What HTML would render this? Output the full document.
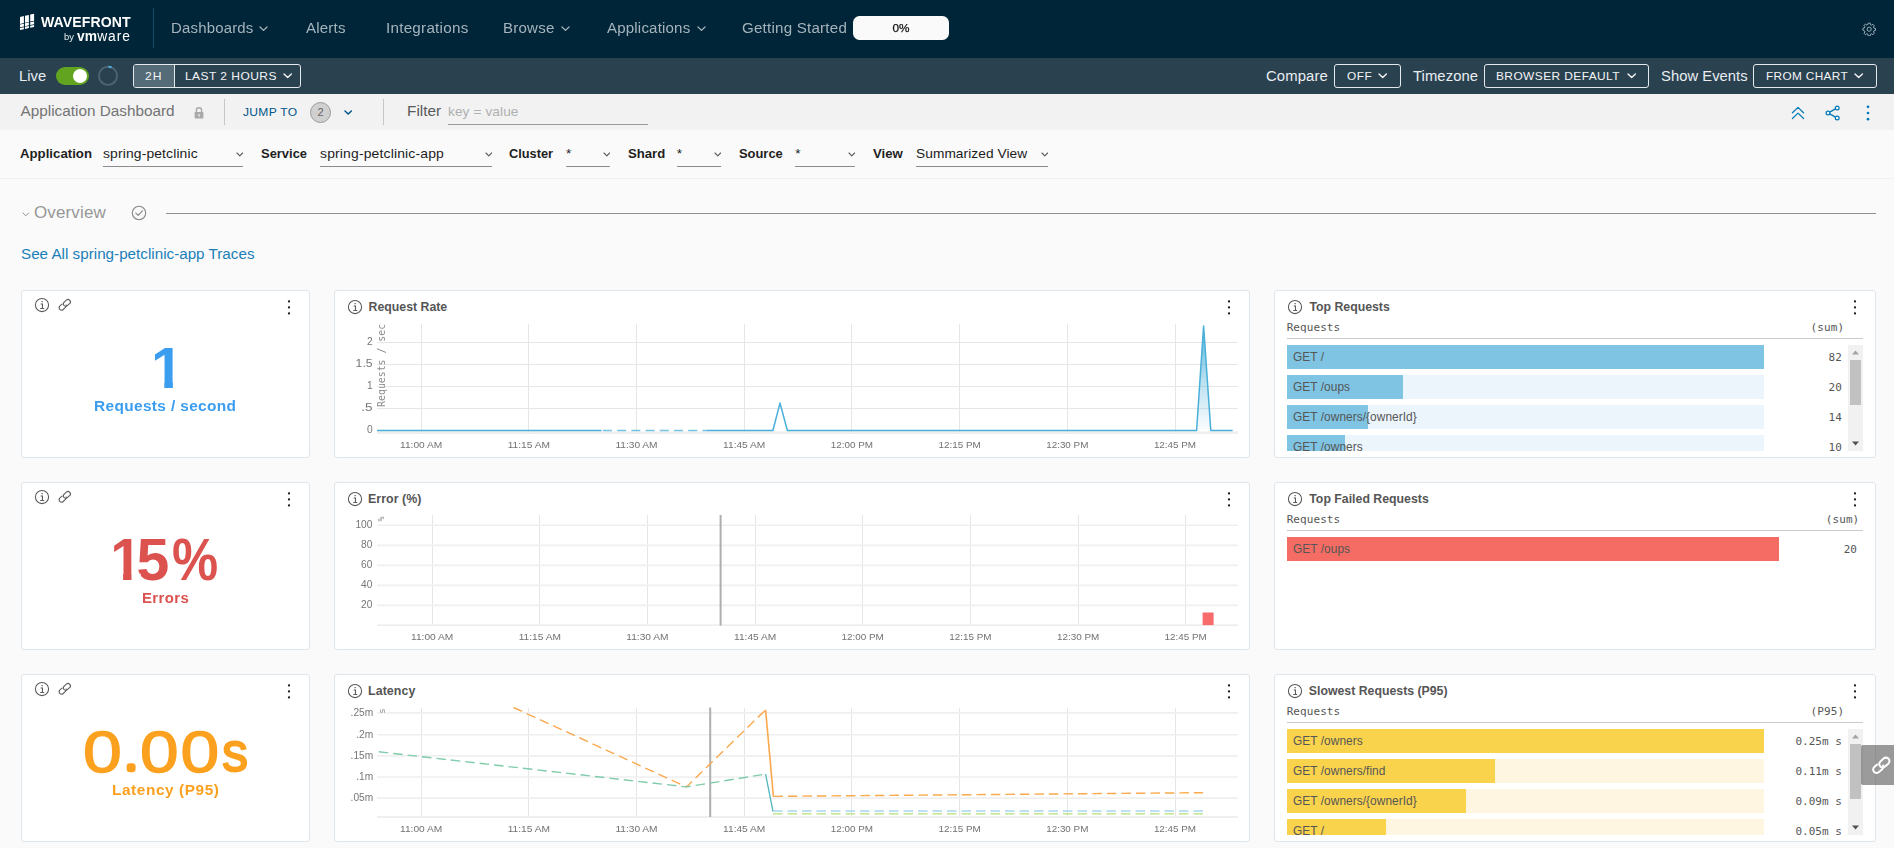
<!DOCTYPE html>
<html lang="en"><head><meta charset="utf-8"><title>Application Dashboard | Wavefront</title>
<style>
html,body{margin:0;padding:0;background:#fafafa;}
body{width:1894px;height:848px;position:relative;overflow:hidden;font-family:"Liberation Sans",Arial,sans-serif;-webkit-font-smoothing:antialiased;}
.r{position:absolute;display:block;margin:0;padding:0;}
.gs{will-change:transform;}
.t{position:absolute;display:block;white-space:nowrap;margin:0;padding:0;}
svg text{white-space:pre;}
</style></head><body>
<div class="r gs" style="left:0;top:0;width:1894px;height:58px">
<div class="r" style="left:0px;top:0px;width:1894px;height:58px;background:#002538;"></div>
<svg class="r" style="left:20px;top:13.2px;" width="15" height="18" viewBox="0 0 15 18"><path d="M0.00 3.90 L3.90 3.10 L3.90 10.10 L0.00 10.90 Z" fill="#fff"/><path d="M0.00 11.55 L3.90 10.75 L3.90 13.55 L0.00 14.35 Z" fill="#fff"/><path d="M0.00 15.00 L3.90 14.20 L3.90 16.30 L0.00 17.10 Z" fill="#fff"/><path d="M5.00 2.70 L8.90 1.90 L8.90 8.90 L5.00 9.70 Z" fill="#fff"/><path d="M5.00 10.35 L8.90 9.55 L8.90 12.35 L5.00 13.15 Z" fill="#fff"/><path d="M5.00 13.80 L8.90 13.00 L8.90 15.10 L5.00 15.90 Z" fill="#fff"/><path d="M10.20 1.60 L14.10 0.80 L14.10 7.80 L10.20 8.60 Z" fill="#fff"/><path d="M10.20 9.25 L14.10 8.45 L14.10 11.25 L10.20 12.05 Z" fill="#fff"/><path d="M10.20 12.70 L14.10 11.90 L14.10 14.00 L10.20 14.80 Z" fill="#fff"/></svg>
<span class="t" style="left:40.50px;top:12.84px;font:700 14px/18px 'Liberation Sans', Arial, sans-serif;color:#ffffff;letter-spacing:0.076px;transform:scaleX(1.0070);transform-origin:0 0;">WAVEFRONT</span>
<span class="t" style="left:64.29px;top:31.17px;font:400 9.6px/12px 'Liberation Sans', Arial, sans-serif;color:#e8edf0;letter-spacing:0.000px;transform:scaleX(0.9785);transform-origin:0 0;">by</span>
<span class="t" style="left:77.1px;top:27.9px;font:400 13.8px/18px 'Liberation Sans', Arial, sans-serif;color:#fff;letter-spacing:0.9px"><b style="letter-spacing:0.1px">vm</b>ware</span>
<div class="r" style="left:153px;top:8px;width:1px;height:40px;background:#0f4a6c;"></div>
<span class="t" style="left:170.80px;top:18.80px;font:400 14.7px/19px 'Liberation Sans', Arial, sans-serif;color:#a5b4bc;letter-spacing:0.167px;transform:scaleX(1.0197);transform-origin:0 0;">Dashboards</span>
<svg class="r" style="left:257.7px;top:24.9px;" width="11" height="7.4" viewBox="0 0 11 7.4"><path d="M2 2 L5.5 5.4 L9 2" fill="none" stroke="#a5b4bc" stroke-width="1.3" stroke-linecap="round" stroke-linejoin="round"/></svg>
<span class="t" style="left:305.80px;top:18.80px;font:400 14.7px/19px 'Liberation Sans', Arial, sans-serif;color:#a5b4bc;letter-spacing:0.181px;transform:scaleX(1.0251);transform-origin:0 0;">Alerts</span>
<span class="t" style="left:386.23px;top:18.80px;font:400 14.7px/19px 'Liberation Sans', Arial, sans-serif;color:#a5b4bc;letter-spacing:0.238px;transform:scaleX(1.0362);transform-origin:0 0;">Integrations</span>
<span class="t" style="left:503.39px;top:18.80px;font:400 14.7px/19px 'Liberation Sans', Arial, sans-serif;color:#a5b4bc;letter-spacing:0.228px;transform:scaleX(1.0248);transform-origin:0 0;">Browse</span>
<svg class="r" style="left:559.5px;top:24.9px;" width="11" height="7.4" viewBox="0 0 11 7.4"><path d="M2 2 L5.5 5.4 L9 2" fill="none" stroke="#a5b4bc" stroke-width="1.3" stroke-linecap="round" stroke-linejoin="round"/></svg>
<span class="t" style="left:607.30px;top:18.80px;font:400 14.7px/19px 'Liberation Sans', Arial, sans-serif;color:#a5b4bc;letter-spacing:0.177px;transform:scaleX(1.0253);transform-origin:0 0;">Applications</span>
<svg class="r" style="left:695.5px;top:24.9px;" width="11" height="7.4" viewBox="0 0 11 7.4"><path d="M2 2 L5.5 5.4 L9 2" fill="none" stroke="#a5b4bc" stroke-width="1.3" stroke-linecap="round" stroke-linejoin="round"/></svg>
<span class="t" style="left:742.24px;top:18.80px;font:400 14.7px/19px 'Liberation Sans', Arial, sans-serif;color:#a5b4bc;letter-spacing:0.207px;transform:scaleX(1.0306);transform-origin:0 0;">Getting Started</span>
<div class="r" style="left:853px;top:16px;width:96px;height:24px;background:#fafafa;border-radius:6.5px"></div>
<span class="t" style="left:892.45px;top:20.61px;font:400 11.8px/15px 'Liberation Sans', Arial, sans-serif;color:#111;letter-spacing:0.000px;-webkit-text-stroke:0.25px #111;">0%</span>
<svg class="r" style="left:1862px;top:22px;" width="14.4" height="14.4" viewBox="0 0 16 16"><g fill="none" stroke="#9fb0ba" stroke-width="1.1"><circle cx="8" cy="8" r="2.3"/><path d="M6.9 1.3h2.2l.35 1.75 1.25.52 1.5-1 1.55 1.55-1 1.5.52 1.25 1.75.35v2.2l-1.75.35-.52 1.25 1 1.5-1.55 1.55-1.5-1-1.25.52-.35 1.75H6.9l-.35-1.75-1.25-.52-1.5 1-1.55-1.55 1-1.5-.52-1.25L1 9.1V6.9l1.73-.35.52-1.25-1-1.5L3.8 2.25l1.5 1 1.25-.52z" stroke-linejoin="round"/></g></svg>
</div>
<div class="r" style="left:0px;top:58px;width:1894px;height:36px;background:#2a4150;"></div>
<span class="t" style="left:19.42px;top:66.50px;font:400 14.7px/19px 'Liberation Sans', Arial, sans-serif;color:#e9edf0;letter-spacing:0.031px;transform:scaleX(1.0038);transform-origin:0 0;">Live</span>
<div class="r" style="left:56px;top:67px;width:33px;height:18px;background:#62a420;border-radius:9px"></div>
<div class="r" style="left:72.8px;top:68.8px;width:14.4px;height:14.4px;background:#ffffff;border-radius:7.2px"></div>
<svg class="r" style="left:97px;top:65px;" width="22" height="22" viewBox="0 0 22 22"><circle cx="11" cy="10.8" r="9.1" fill="none" stroke="#4d6473" stroke-width="1.9"/><path d="M11.4 1.7 A9.1 9.1 0 0 1 14.6 2.45" fill="none" stroke="#49afd9" stroke-width="1.9"/></svg>
<div class="r" style="left:133px;top:64px;width:168px;height:24px;background:transparent;border:1px solid #e6eaec;border-radius:3px;box-sizing:border-box"></div>
<div class="r" style="left:134px;top:65px;width:40px;height:22px;background:#566b78;border-radius:2px 0 0 2px;border-right:1px solid #e6eaec"></div>
<span class="t" style="left:145.39px;top:69.18px;font:400 11.3px/15px 'Liberation Sans', Arial, sans-serif;color:#f2f4f5;letter-spacing:0.912px;transform:scaleX(1.0758);transform-origin:0 0;">2H</span>
<span class="t" style="left:184.54px;top:69.18px;font:400 11.3px/15px 'Liberation Sans', Arial, sans-serif;color:#f2f4f5;letter-spacing:0.424px;transform:scaleX(1.0618);transform-origin:0 0;">LAST 2 HOURS</span>
<svg class="r" style="left:282.3px;top:72.2px;" width="11.4" height="7.6" viewBox="0 0 11.4 7.6"><path d="M2 2 L5.7 5.6 L9.4 2" fill="none" stroke="#f2f4f5" stroke-width="1.4" stroke-linecap="round" stroke-linejoin="round"/></svg>
<span class="t" style="left:1266.06px;top:66.50px;font:400 14.7px/19px 'Liberation Sans', Arial, sans-serif;color:#e9edf0;letter-spacing:0.116px;transform:scaleX(1.0119);transform-origin:0 0;">Compare</span>
<div class="r" style="left:1334px;top:64px;width:67px;height:24px;background:transparent;border:1px solid #e6eaec;border-radius:3px;box-sizing:border-box"></div>
<span class="t" style="left:1347.07px;top:69.18px;font:400 11.3px/15px 'Liberation Sans', Arial, sans-serif;color:#f2f4f5;letter-spacing:0.492px;transform:scaleX(1.0476);transform-origin:0 0;">OFF</span>
<svg class="r" style="left:1377.3px;top:72.2px;" width="11.4" height="7.6" viewBox="0 0 11.4 7.6"><path d="M2 2 L5.7 5.6 L9.4 2" fill="none" stroke="#f2f4f5" stroke-width="1.4" stroke-linecap="round" stroke-linejoin="round"/></svg>
<span class="t" style="left:1413.20px;top:66.50px;font:400 14.7px/19px 'Liberation Sans', Arial, sans-serif;color:#e9edf0;letter-spacing:0.075px;transform:scaleX(1.0084);transform-origin:0 0;">Timezone</span>
<div class="r" style="left:1484px;top:64px;width:165px;height:24px;background:transparent;border:1px solid #e6eaec;border-radius:3px;box-sizing:border-box"></div>
<span class="t" style="left:1496.35px;top:69.18px;font:400 11.3px/15px 'Liberation Sans', Arial, sans-serif;color:#f2f4f5;letter-spacing:0.406px;transform:scaleX(1.0543);transform-origin:0 0;">BROWSER DEFAULT</span>
<svg class="r" style="left:1625.6px;top:72.2px;" width="11.4" height="7.6" viewBox="0 0 11.4 7.6"><path d="M2 2 L5.7 5.6 L9.4 2" fill="none" stroke="#f2f4f5" stroke-width="1.4" stroke-linecap="round" stroke-linejoin="round"/></svg>
<span class="t" style="left:1661.23px;top:66.50px;font:400 14.7px/19px 'Liberation Sans', Arial, sans-serif;color:#e9edf0;letter-spacing:0.045px;transform:scaleX(1.0053);transform-origin:0 0;">Show Events</span>
<div class="r" style="left:1753px;top:64px;width:124px;height:24px;background:transparent;border:1px solid #e6eaec;border-radius:3px;box-sizing:border-box"></div>
<span class="t" style="left:1765.76px;top:69.18px;font:400 11.3px/15px 'Liberation Sans', Arial, sans-serif;color:#f2f4f5;letter-spacing:0.343px;transform:scaleX(1.0435);transform-origin:0 0;">FROM CHART</span>
<svg class="r" style="left:1853.3px;top:72.2px;" width="11.4" height="7.6" viewBox="0 0 11.4 7.6"><path d="M2 2 L5.7 5.6 L9.4 2" fill="none" stroke="#f2f4f5" stroke-width="1.4" stroke-linecap="round" stroke-linejoin="round"/></svg>
<div class="r" style="left:0px;top:94px;width:1894px;height:36px;background:#f2f2f2;"></div>
<span class="t" style="left:20.60px;top:100.89px;font:400 15.3px/20px 'Liberation Sans', Arial, sans-serif;color:#747474;letter-spacing:0.000px;">Application Dashboard</span>
<svg class="r" style="left:193px;top:106px;" width="12" height="14" viewBox="0 0 12 14"><path d="M3.4 6.2V4.3a2.6 2.6 0 0 1 5.2 0v1.9" fill="none" stroke="#a9a9a9" stroke-width="1.4"/><rect x="1.6" y="6" width="8.8" height="6.6" rx="0.8" fill="#a9a9a9"/><rect x="5.4" y="8" width="1.2" height="2.6" fill="#f2f2f2"/></svg>
<div class="r" style="left:224px;top:99px;width:1px;height:26px;background:#c6c6c6;"></div>
<span class="t" style="left:243.12px;top:104.47px;font:400 11.6px/15px 'Liberation Sans', Arial, sans-serif;color:#00568a;letter-spacing:0.310px;transform:scaleX(1.0390);transform-origin:0 0;">JUMP TO</span>
<div class="r" style="left:310px;top:102px;width:21px;height:21px;background:#d0d0d0;border-radius:11px;border:1px solid #9a9a9a;box-sizing:border-box"></div>
<span class="t" style="left:317.45px;top:105.18px;font:400 11px/14px 'Liberation Sans', Arial, sans-serif;color:#666;letter-spacing:0.000px;">2</span>
<svg class="r" style="left:342.7px;top:108.8px;" width="10.4" height="7.0" viewBox="0 0 10.4 7.0"><path d="M2 2 L5.2 5.0 L8.4 2" fill="none" stroke="#00568a" stroke-width="1.5" stroke-linecap="round" stroke-linejoin="round"/></svg>
<div class="r" style="left:383px;top:99px;width:1px;height:26px;background:#c6c6c6;"></div>
<span class="t" style="left:407.37px;top:100.89px;font:400 15.3px/20px 'Liberation Sans', Arial, sans-serif;color:#5a5a5a;letter-spacing:0.021px;transform:scaleX(1.0032);transform-origin:0 0;">Filter</span>
<span class="t" style="left:447.91px;top:102.85px;font:400 13.4px/17px 'Liberation Sans', Arial, sans-serif;color:#b0b0b0;letter-spacing:0.112px;transform:scaleX(1.0170);transform-origin:0 0;">key = value</span>
<div class="r" style="left:448px;top:124px;width:200px;height:1px;background:#9a9a9a;"></div>
<svg class="r" style="left:1790px;top:105px;" width="16" height="16" viewBox="0 0 16 16"><path d="M2.4 7.8 L8 2.4 L13.6 7.8 M2.4 13.5 L8 8.1 L13.6 13.5" fill="none" stroke="#0079b8" stroke-width="1.2" stroke-linejoin="round" stroke-linecap="round"/></svg>
<svg class="r" style="left:1825px;top:105px;" width="16" height="16" viewBox="0 0 16 16"><g fill="none" stroke="#0079b8" stroke-width="1.2"><circle cx="12.2" cy="3" r="1.9"/><circle cx="12.2" cy="13" r="1.9"/><circle cx="3" cy="8" r="1.9"/><path d="M4.7 7.1 L10.5 3.9 M4.7 8.9 L10.5 12.1"/></g></svg>
<svg class="r" style="left:1865px;top:104px;" width="6" height="18" viewBox="0 0 6 18"><g fill="#0079b8"><circle cx="3" cy="2.8" r="1.35"/><circle cx="3" cy="9" r="1.35"/><circle cx="3" cy="15.2" r="1.35"/></g></svg>
<div class="r" style="left:0px;top:130px;width:1894px;height:718px;background:#fafafa;"></div>
<div class="r" style="left:0px;top:178px;width:1894px;height:1px;background:#f0f0f0;"></div>
<span class="t" style="left:19.97px;top:144.85px;font:700 13.4px/17px 'Liberation Sans', Arial, sans-serif;color:#1f1f1f;letter-spacing:0.000px;transform:scaleX(0.9871);transform-origin:0 0;">Application</span>
<span class="t" style="left:103.35px;top:144.88px;font:400 13.6px/18px 'Liberation Sans', Arial, sans-serif;color:#1c1c1c;letter-spacing:0.129px;transform:scaleX(1.0220);transform-origin:0 0;">spring-petclinic</span>
<div class="r" style="left:103px;top:166px;width:140px;height:1px;background:#8c8c8c;"></div>
<svg class="r" style="left:235.0px;top:151.45px;" width="9.6" height="6.9" viewBox="0 0 9.6 6.9"><path d="M2 2 L4.8 4.9 L7.6 2" fill="none" stroke="#5c5c5c" stroke-width="1.1" stroke-linecap="round" stroke-linejoin="round"/></svg>
<span class="t" style="left:261.41px;top:144.85px;font:700 13.4px/17px 'Liberation Sans', Arial, sans-serif;color:#1f1f1f;letter-spacing:0.000px;transform:scaleX(0.9659);transform-origin:0 0;">Service</span>
<span class="t" style="left:319.65px;top:144.88px;font:400 13.6px/18px 'Liberation Sans', Arial, sans-serif;color:#1c1c1c;letter-spacing:0.153px;transform:scaleX(1.0255);transform-origin:0 0;">spring-petclinic-app</span>
<div class="r" style="left:320px;top:166px;width:172px;height:1px;background:#8c8c8c;"></div>
<svg class="r" style="left:484.1px;top:151.45px;" width="9.6" height="6.9" viewBox="0 0 9.6 6.9"><path d="M2 2 L4.8 4.9 L7.6 2" fill="none" stroke="#5c5c5c" stroke-width="1.1" stroke-linecap="round" stroke-linejoin="round"/></svg>
<span class="t" style="left:509.49px;top:144.85px;font:700 13.4px/17px 'Liberation Sans', Arial, sans-serif;color:#1f1f1f;letter-spacing:0.000px;transform:scaleX(0.9554);transform-origin:0 0;">Cluster</span>
<span class="t" style="left:566.00px;top:144.88px;font:400 13.6px/18px 'Liberation Sans', Arial, sans-serif;color:#1c1c1c;letter-spacing:0.000px;">*</span>
<div class="r" style="left:566px;top:166px;width:44px;height:1px;background:#8c8c8c;"></div>
<svg class="r" style="left:601.6px;top:151.45px;" width="9.6" height="6.9" viewBox="0 0 9.6 6.9"><path d="M2 2 L4.8 4.9 L7.6 2" fill="none" stroke="#5c5c5c" stroke-width="1.1" stroke-linecap="round" stroke-linejoin="round"/></svg>
<span class="t" style="left:627.91px;top:144.85px;font:700 13.4px/17px 'Liberation Sans', Arial, sans-serif;color:#1f1f1f;letter-spacing:0.000px;transform:scaleX(0.9805);transform-origin:0 0;">Shard</span>
<span class="t" style="left:676.80px;top:144.88px;font:400 13.6px/18px 'Liberation Sans', Arial, sans-serif;color:#1c1c1c;letter-spacing:0.000px;">*</span>
<div class="r" style="left:677px;top:166px;width:44px;height:1px;background:#8c8c8c;"></div>
<svg class="r" style="left:712.8px;top:151.45px;" width="9.6" height="6.9" viewBox="0 0 9.6 6.9"><path d="M2 2 L4.8 4.9 L7.6 2" fill="none" stroke="#5c5c5c" stroke-width="1.1" stroke-linecap="round" stroke-linejoin="round"/></svg>
<span class="t" style="left:738.61px;top:144.85px;font:700 13.4px/17px 'Liberation Sans', Arial, sans-serif;color:#1f1f1f;letter-spacing:0.000px;transform:scaleX(0.9637);transform-origin:0 0;">Source</span>
<span class="t" style="left:795.30px;top:144.88px;font:400 13.6px/18px 'Liberation Sans', Arial, sans-serif;color:#1c1c1c;letter-spacing:0.000px;">*</span>
<div class="r" style="left:795px;top:166px;width:60px;height:1px;background:#8c8c8c;"></div>
<svg class="r" style="left:846.9px;top:151.45px;" width="9.6" height="6.9" viewBox="0 0 9.6 6.9"><path d="M2 2 L4.8 4.9 L7.6 2" fill="none" stroke="#5c5c5c" stroke-width="1.1" stroke-linecap="round" stroke-linejoin="round"/></svg>
<span class="t" style="left:873.13px;top:144.85px;font:700 13.4px/17px 'Liberation Sans', Arial, sans-serif;color:#1f1f1f;letter-spacing:0.000px;transform:scaleX(0.9840);transform-origin:0 0;">View</span>
<span class="t" style="left:915.78px;top:144.88px;font:400 13.6px/18px 'Liberation Sans', Arial, sans-serif;color:#1c1c1c;letter-spacing:0.064px;transform:scaleX(1.0083);transform-origin:0 0;">Summarized View</span>
<div class="r" style="left:916px;top:166px;width:132px;height:1px;background:#8c8c8c;"></div>
<svg class="r" style="left:1039.9px;top:151.45px;" width="9.6" height="6.9" viewBox="0 0 9.6 6.9"><path d="M2 2 L4.8 4.9 L7.6 2" fill="none" stroke="#5c5c5c" stroke-width="1.1" stroke-linecap="round" stroke-linejoin="round"/></svg>
<svg class="r" style="left:20.9px;top:210.5px;" width="9.6" height="6.8" viewBox="0 0 9.6 6.8"><path d="M2 2 L4.8 4.8 L7.6 2" fill="none" stroke="#8c8c8c" stroke-width="0.95" stroke-linecap="round" stroke-linejoin="round"/></svg>
<span class="t" style="left:34.13px;top:202.47px;font:400 16.8px/22px 'Liberation Sans', Arial, sans-serif;color:#979797;letter-spacing:0.127px;transform:scaleX(1.0130);transform-origin:0 0;">Overview</span>
<svg class="r" style="left:131px;top:204.6px;" width="16" height="16" viewBox="0 0 16 16"><circle cx="8" cy="8" r="6.7" fill="none" stroke="#8a8a8a" stroke-width="1.1"/><path d="M4.8 8.1 L7.2 10.4 L11.4 5.8" fill="none" stroke="#8a8a8a" stroke-width="1.2" stroke-linecap="round" stroke-linejoin="round"/></svg>
<div class="r" style="left:166px;top:212.6px;width:1710px;height:1.2px;background:#8f8f8f;"></div>
<span class="t" style="left:20.51px;top:244.39px;font:400 15.3px/20px 'Liberation Sans', Arial, sans-serif;color:#1a7fb9;letter-spacing:0.000px;transform:scaleX(0.9950);transform-origin:0 0;">See All spring-petclinic-app Traces</span>
<div class="r" style="left:21px;top:290px;width:289px;height:168px;background:#ffffff;border:1px solid #dfe6ec;border-radius:3px;box-sizing:border-box"></div>
<svg class="r" style="left:34px;top:296.9px;" width="16" height="16" viewBox="0 0 16 16"><circle cx="8" cy="8" r="6.6" fill="none" stroke="#585858" stroke-width="1.05"/><rect x="7.4" y="4.2" width="1.5" height="1.0" fill="#585858"/><path d="M6.7 7.0 H8.45 V11.4 M6.3 11.45 H10.2" fill="none" stroke="#585858" stroke-width="1.05"/></svg>
<svg class="r" style="left:56.5px;top:297.1px;" width="16" height="16" viewBox="0 0 16 16"><g fill="none" stroke="#5a5a5a" stroke-width="1.05"><rect x="-3.9" y="-2.4" width="7.8" height="4.8" rx="2.4" transform="translate(9.9 5.9) rotate(-42)"/><path d="M1.6 -2.4 H-1.5 a2.4 2.4 0 0 0 0 4.8 H1.5 a2.4 2.4 0 0 0 2.35 -1.9 M3.2 -1.75 a2.4 2.4 0 0 0 -0.6 -0.45" transform="translate(5.7 9.7) rotate(-42)"/></g></svg>
<svg class="r" style="left:286.1px;top:298.9px;" width="6" height="17" viewBox="0 0 6 17"><g fill="#1a1a1a"><circle cx="3" cy="2.4" r="1.15"/><circle cx="3" cy="8.4" r="1.15"/><circle cx="3" cy="14.4" r="1.15"/></g></svg>
<div class="r" style="left:334px;top:290px;width:916px;height:168px;background:#ffffff;border:1px solid #dfe6ec;border-radius:3px;box-sizing:border-box"></div>
<svg class="r" style="left:347px;top:299.1px;" width="16" height="16" viewBox="0 0 16 16"><circle cx="8" cy="8" r="6.6" fill="none" stroke="#585858" stroke-width="1.05"/><rect x="7.4" y="4.2" width="1.5" height="1.0" fill="#585858"/><path d="M6.7 7.0 H8.45 V11.4 M6.3 11.45 H10.2" fill="none" stroke="#585858" stroke-width="1.05"/></svg>
<svg class="r" style="left:1226px;top:299.1px;" width="6" height="17" viewBox="0 0 6 17"><g fill="#1a1a1a"><circle cx="3" cy="2.4" r="1.15"/><circle cx="3" cy="8.4" r="1.15"/><circle cx="3" cy="14.4" r="1.15"/></g></svg>
<div class="r" style="left:1274px;top:290px;width:602px;height:168px;background:#ffffff;border:1px solid #dfe6ec;border-radius:3px;box-sizing:border-box"></div>
<svg class="r" style="left:1287px;top:298.8px;" width="16" height="16" viewBox="0 0 16 16"><circle cx="8" cy="8" r="6.6" fill="none" stroke="#585858" stroke-width="1.05"/><rect x="7.4" y="4.2" width="1.5" height="1.0" fill="#585858"/><path d="M6.7 7.0 H8.45 V11.4 M6.3 11.45 H10.2" fill="none" stroke="#585858" stroke-width="1.05"/></svg>
<svg class="r" style="left:1851.8px;top:298.9px;" width="6" height="17" viewBox="0 0 6 17"><g fill="#1a1a1a"><circle cx="3" cy="2.4" r="1.15"/><circle cx="3" cy="8.4" r="1.15"/><circle cx="3" cy="14.4" r="1.15"/></g></svg>
<div class="r" style="left:21px;top:482px;width:289px;height:168px;background:#ffffff;border:1px solid #dfe6ec;border-radius:3px;box-sizing:border-box"></div>
<svg class="r" style="left:34px;top:488.9px;" width="16" height="16" viewBox="0 0 16 16"><circle cx="8" cy="8" r="6.6" fill="none" stroke="#585858" stroke-width="1.05"/><rect x="7.4" y="4.2" width="1.5" height="1.0" fill="#585858"/><path d="M6.7 7.0 H8.45 V11.4 M6.3 11.45 H10.2" fill="none" stroke="#585858" stroke-width="1.05"/></svg>
<svg class="r" style="left:56.5px;top:489.1px;" width="16" height="16" viewBox="0 0 16 16"><g fill="none" stroke="#5a5a5a" stroke-width="1.05"><rect x="-3.9" y="-2.4" width="7.8" height="4.8" rx="2.4" transform="translate(9.9 5.9) rotate(-42)"/><path d="M1.6 -2.4 H-1.5 a2.4 2.4 0 0 0 0 4.8 H1.5 a2.4 2.4 0 0 0 2.35 -1.9 M3.2 -1.75 a2.4 2.4 0 0 0 -0.6 -0.45" transform="translate(5.7 9.7) rotate(-42)"/></g></svg>
<svg class="r" style="left:286.1px;top:490.9px;" width="6" height="17" viewBox="0 0 6 17"><g fill="#1a1a1a"><circle cx="3" cy="2.4" r="1.15"/><circle cx="3" cy="8.4" r="1.15"/><circle cx="3" cy="14.4" r="1.15"/></g></svg>
<div class="r" style="left:334px;top:482px;width:916px;height:168px;background:#ffffff;border:1px solid #dfe6ec;border-radius:3px;box-sizing:border-box"></div>
<svg class="r" style="left:347px;top:491.1px;" width="16" height="16" viewBox="0 0 16 16"><circle cx="8" cy="8" r="6.6" fill="none" stroke="#585858" stroke-width="1.05"/><rect x="7.4" y="4.2" width="1.5" height="1.0" fill="#585858"/><path d="M6.7 7.0 H8.45 V11.4 M6.3 11.45 H10.2" fill="none" stroke="#585858" stroke-width="1.05"/></svg>
<svg class="r" style="left:1226px;top:491.1px;" width="6" height="17" viewBox="0 0 6 17"><g fill="#1a1a1a"><circle cx="3" cy="2.4" r="1.15"/><circle cx="3" cy="8.4" r="1.15"/><circle cx="3" cy="14.4" r="1.15"/></g></svg>
<div class="r" style="left:1274px;top:482px;width:602px;height:168px;background:#ffffff;border:1px solid #dfe6ec;border-radius:3px;box-sizing:border-box"></div>
<svg class="r" style="left:1287px;top:490.8px;" width="16" height="16" viewBox="0 0 16 16"><circle cx="8" cy="8" r="6.6" fill="none" stroke="#585858" stroke-width="1.05"/><rect x="7.4" y="4.2" width="1.5" height="1.0" fill="#585858"/><path d="M6.7 7.0 H8.45 V11.4 M6.3 11.45 H10.2" fill="none" stroke="#585858" stroke-width="1.05"/></svg>
<svg class="r" style="left:1851.8px;top:490.9px;" width="6" height="17" viewBox="0 0 6 17"><g fill="#1a1a1a"><circle cx="3" cy="2.4" r="1.15"/><circle cx="3" cy="8.4" r="1.15"/><circle cx="3" cy="14.4" r="1.15"/></g></svg>
<div class="r" style="left:21px;top:674px;width:289px;height:168px;background:#ffffff;border:1px solid #dfe6ec;border-radius:3px;box-sizing:border-box"></div>
<svg class="r" style="left:34px;top:680.9px;" width="16" height="16" viewBox="0 0 16 16"><circle cx="8" cy="8" r="6.6" fill="none" stroke="#585858" stroke-width="1.05"/><rect x="7.4" y="4.2" width="1.5" height="1.0" fill="#585858"/><path d="M6.7 7.0 H8.45 V11.4 M6.3 11.45 H10.2" fill="none" stroke="#585858" stroke-width="1.05"/></svg>
<svg class="r" style="left:56.5px;top:681.1px;" width="16" height="16" viewBox="0 0 16 16"><g fill="none" stroke="#5a5a5a" stroke-width="1.05"><rect x="-3.9" y="-2.4" width="7.8" height="4.8" rx="2.4" transform="translate(9.9 5.9) rotate(-42)"/><path d="M1.6 -2.4 H-1.5 a2.4 2.4 0 0 0 0 4.8 H1.5 a2.4 2.4 0 0 0 2.35 -1.9 M3.2 -1.75 a2.4 2.4 0 0 0 -0.6 -0.45" transform="translate(5.7 9.7) rotate(-42)"/></g></svg>
<svg class="r" style="left:286.1px;top:682.9px;" width="6" height="17" viewBox="0 0 6 17"><g fill="#1a1a1a"><circle cx="3" cy="2.4" r="1.15"/><circle cx="3" cy="8.4" r="1.15"/><circle cx="3" cy="14.4" r="1.15"/></g></svg>
<div class="r" style="left:334px;top:674px;width:916px;height:168px;background:#ffffff;border:1px solid #dfe6ec;border-radius:3px;box-sizing:border-box"></div>
<svg class="r" style="left:347px;top:683.1px;" width="16" height="16" viewBox="0 0 16 16"><circle cx="8" cy="8" r="6.6" fill="none" stroke="#585858" stroke-width="1.05"/><rect x="7.4" y="4.2" width="1.5" height="1.0" fill="#585858"/><path d="M6.7 7.0 H8.45 V11.4 M6.3 11.45 H10.2" fill="none" stroke="#585858" stroke-width="1.05"/></svg>
<svg class="r" style="left:1226px;top:683.1px;" width="6" height="17" viewBox="0 0 6 17"><g fill="#1a1a1a"><circle cx="3" cy="2.4" r="1.15"/><circle cx="3" cy="8.4" r="1.15"/><circle cx="3" cy="14.4" r="1.15"/></g></svg>
<div class="r" style="left:1274px;top:674px;width:602px;height:168px;background:#ffffff;border:1px solid #dfe6ec;border-radius:3px;box-sizing:border-box"></div>
<svg class="r" style="left:1287px;top:682.8px;" width="16" height="16" viewBox="0 0 16 16"><circle cx="8" cy="8" r="6.6" fill="none" stroke="#585858" stroke-width="1.05"/><rect x="7.4" y="4.2" width="1.5" height="1.0" fill="#585858"/><path d="M6.7 7.0 H8.45 V11.4 M6.3 11.45 H10.2" fill="none" stroke="#585858" stroke-width="1.05"/></svg>
<svg class="r" style="left:1851.8px;top:682.9px;" width="6" height="17" viewBox="0 0 6 17"><g fill="#1a1a1a"><circle cx="3" cy="2.4" r="1.15"/><circle cx="3" cy="8.4" r="1.15"/><circle cx="3" cy="14.4" r="1.15"/></g></svg>
<svg class="r gs" style="left:146.9px;top:338.1px" width="37.6" height="63.9" viewBox="146.9 338.1 37.6 63.9"><defs><clipPath id="bc1"><rect x="146.90" y="338.10" width="37.60" height="43.38"/><rect x="164.20" y="380.48" width="8.60" height="63.90"/><rect x="182.30" y="380.48" width="2.40" height="63.90"/></clipPath></defs><text font-family="'Liberation Sans', Arial, sans-serif" fill="#3a9df0" clip-path="url(#bc1)"><tspan x="150.97" y="388.00" font-size="57.99" font-weight="700" textLength="32.36" lengthAdjust="spacingAndGlyphs">1</tspan></text></svg>
<span class="t" style="left:94.40px;top:396.76px;font:700 14.8px/19px 'Liberation Sans', Arial, sans-serif;color:#3a9df0;letter-spacing:0.334px;transform:scaleX(1.0433);transform-origin:0 0;will-change:transform;">Requests / second</span>
<svg class="r gs" style="left:105.5px;top:530.0px" width="122.8" height="64.2" viewBox="105.5 530.0 122.8 64.2"><defs><clipPath id="bc2"><rect x="105.50" y="530.00" width="122.80" height="43.64"/><rect x="122.58" y="572.64" width="8.42" height="64.20"/><rect x="140.28" y="572.64" width="88.22" height="64.20"/></clipPath></defs><text font-family="'Liberation Sans', Arial, sans-serif" fill="#db524f" clip-path="url(#bc2)"><tspan x="109.66" y="580.20" font-size="58.43" font-weight="700" textLength="31.62" lengthAdjust="spacingAndGlyphs">1</tspan><tspan x="136.13" y="580.20" font-size="58.43" font-weight="700" textLength="32.81" lengthAdjust="spacingAndGlyphs">5</tspan><tspan x="171.40" y="580.20" font-size="58.43" font-weight="700" textLength="46.15" lengthAdjust="spacingAndGlyphs">%</tspan></text></svg>
<span class="t" style="left:141.73px;top:589.07px;font:700 14.2px/18px 'Liberation Sans', Arial, sans-serif;color:#db524f;letter-spacing:0.399px;transform:scaleX(1.0510);transform-origin:0 0;will-change:transform;">Errors</span>
<svg class="r gs" style="left:76.6px;top:721.6px" width="182.1" height="64.4" viewBox="76.6 721.6 182.1 64.4"><text font-family="'Liberation Sans', Arial, sans-serif" fill="#fca11f"><tspan x="82.61" y="771.35" font-size="56.83" font-weight="400" stroke="#fca11f" stroke-width="1.3" stroke-linejoin="round" textLength="38.82" lengthAdjust="spacingAndGlyphs">0</tspan><tspan x="127.65" y="768.70" font-size="22.00" font-weight="400" stroke="#fca11f" stroke-width="6.6" stroke-linejoin="round" textLength="6.25" lengthAdjust="spacingAndGlyphs">.</tspan><tspan x="139.62" y="771.35" font-size="56.83" font-weight="400" stroke="#fca11f" stroke-width="1.3" stroke-linejoin="round" textLength="38.60" lengthAdjust="spacingAndGlyphs">0</tspan><tspan x="180.01" y="771.35" font-size="56.83" font-weight="400" stroke="#fca11f" stroke-width="1.3" stroke-linejoin="round" textLength="38.71" lengthAdjust="spacingAndGlyphs">0</tspan><tspan x="221.58" y="771.05" font-size="55.96" font-weight="400" stroke="#fca11f" stroke-width="1.9" stroke-linejoin="round" textLength="26.06" lengthAdjust="spacingAndGlyphs">s</tspan></text></svg>
<span class="t" style="left:111.80px;top:781.07px;font:700 14.2px/18px 'Liberation Sans', Arial, sans-serif;color:#fca11f;letter-spacing:0.562px;transform:scaleX(1.0802);transform-origin:0 0;will-change:transform;">Latency (P95)</span>
<span class="t" style="left:368.60px;top:298.93px;font:700 12.3px/16px 'Liberation Sans', Arial, sans-serif;color:#555555;letter-spacing:0.000px;">Request Rate</span>
<span class="t" style="left:367.89px;top:490.93px;font:700 12.3px/16px 'Liberation Sans', Arial, sans-serif;color:#555555;letter-spacing:0.048px;transform:scaleX(1.0075);transform-origin:0 0;">Error (%)</span>
<span class="t" style="left:367.89px;top:682.93px;font:700 12.3px/16px 'Liberation Sans', Arial, sans-serif;color:#555555;letter-spacing:0.072px;transform:scaleX(1.0095);transform-origin:0 0;">Latency</span>
<span class="t" style="left:1309.38px;top:298.93px;font:700 12.3px/16px 'Liberation Sans', Arial, sans-serif;color:#555555;letter-spacing:0.000px;">Top Requests</span>
<span class="t" style="left:1309.28px;top:490.93px;font:700 12.3px/16px 'Liberation Sans', Arial, sans-serif;color:#555555;letter-spacing:0.007px;">Top Failed Requests</span>
<span class="t" style="left:1308.83px;top:682.93px;font:700 12.3px/16px 'Liberation Sans', Arial, sans-serif;color:#555555;letter-spacing:0.000px;">Slowest Requests (P95)</span>
<svg class="r gs" style="left:335px;top:290.5px" width="914" height="166" viewBox="335 290.5 914 166"><g stroke="#e6e6e6" stroke-width="1" shape-rendering="crispEdges"><line x1="421.5" y1="323" x2="421.5" y2="433"/><line x1="528.5" y1="323" x2="528.5" y2="433"/><line x1="636.5" y1="323" x2="636.5" y2="433"/><line x1="744.5" y1="323" x2="744.5" y2="433"/><line x1="851.5" y1="323" x2="851.5" y2="433"/><line x1="959.5" y1="323" x2="959.5" y2="433"/><line x1="1067.5" y1="323" x2="1067.5" y2="433"/><line x1="1175.5" y1="323" x2="1175.5" y2="433"/></g><g stroke="#e6e6e6" stroke-width="1.1"><line x1="377" y1="342" x2="1238" y2="342"/><line x1="377" y1="364" x2="1238" y2="364"/><line x1="377" y1="386" x2="1238" y2="386"/><line x1="377" y1="408" x2="1238" y2="408"/></g><rect x="377" y="431" width="861" height="2.4" fill="#eeeeee"/><defs><linearGradient id="g1" x1="0" y1="0" x2="0" y2="1"><stop offset="0" stop-color="#49afd9" stop-opacity="0.95"/><stop offset="0.5" stop-color="#49afd9" stop-opacity="0.4"/><stop offset="1" stop-color="#49afd9" stop-opacity="0.02"/></linearGradient></defs><path d="M1196.6 430 L1203.6 325.4 L1210.8 430 Z" fill="url(#g1)"/><g fill="none" stroke="#49afd9" stroke-width="1.7" stroke-linejoin="round"><path d="M377 430 H601.5"/><path d="M603 430 H706.5" stroke-dasharray="9 5.2" stroke-opacity="0.75"/><path d="M706.5 430 H772.9 L780 402.6 L787.4 430 H1196.6 L1203.6 325.4 L1210.8 430 H1232.6" stroke-width="1.5"/></g><g font-family="'Liberation Sans', Arial, sans-serif" font-size="10.8" fill="#767676" text-anchor="end"><text x="372.6" y="344.70" textLength="5.7" lengthAdjust="spacingAndGlyphs">2</text><text x="372.6" y="366.70" textLength="17.0" lengthAdjust="spacingAndGlyphs">1.5</text><text x="372.6" y="388.70" textLength="5.7" lengthAdjust="spacingAndGlyphs">1</text><text x="372.6" y="410.70" textLength="11.3" lengthAdjust="spacingAndGlyphs">.5</text><text x="372.6" y="432.70" textLength="5.7" lengthAdjust="spacingAndGlyphs">0</text></g><text transform="translate(385.3 406.4) rotate(-90)" font-family="'DejaVu Sans Mono', 'Liberation Mono', monospace" font-size="10" fill="#8c8c8c" textLength="83" lengthAdjust="spacingAndGlyphs">Requests / sec</text><g font-family="'Liberation Sans', Arial, sans-serif" font-size="9" fill="#727272"><text x="421.1" y="447.8" text-anchor="middle" textLength="42.2" lengthAdjust="spacingAndGlyphs">11:00 AM</text><text x="528.8" y="447.8" text-anchor="middle" textLength="42.2" lengthAdjust="spacingAndGlyphs">11:15 AM</text><text x="636.5" y="447.8" text-anchor="middle" textLength="42.2" lengthAdjust="spacingAndGlyphs">11:30 AM</text><text x="744.2" y="447.8" text-anchor="middle" textLength="42.2" lengthAdjust="spacingAndGlyphs">11:45 AM</text><text x="851.9" y="447.8" text-anchor="middle" textLength="42.2" lengthAdjust="spacingAndGlyphs">12:00 PM</text><text x="959.6" y="447.8" text-anchor="middle" textLength="42.2" lengthAdjust="spacingAndGlyphs">12:15 PM</text><text x="1067.3" y="447.8" text-anchor="middle" textLength="42.2" lengthAdjust="spacingAndGlyphs">12:30 PM</text><text x="1175.0" y="447.8" text-anchor="middle" textLength="42.2" lengthAdjust="spacingAndGlyphs">12:45 PM</text></g></svg>
<svg class="r gs" style="left:335px;top:482.5px" width="914" height="166" viewBox="335 482.5 914 166"><g stroke="#e6e6e6" stroke-width="1" shape-rendering="crispEdges"><line x1="432.5" y1="514.5" x2="432.5" y2="625"/><line x1="539.5" y1="514.5" x2="539.5" y2="625"/><line x1="647.5" y1="514.5" x2="647.5" y2="625"/><line x1="755.5" y1="514.5" x2="755.5" y2="625"/><line x1="862.5" y1="514.5" x2="862.5" y2="625"/><line x1="970.5" y1="514.5" x2="970.5" y2="625"/><line x1="1078.5" y1="514.5" x2="1078.5" y2="625"/><line x1="1185.5" y1="514.5" x2="1185.5" y2="625"/></g><g stroke="#efefef" stroke-width="1.6"><line x1="377" y1="524.8" x2="1238" y2="524.8"/><line x1="377" y1="544.9" x2="1238" y2="544.9"/><line x1="377" y1="564.9" x2="1238" y2="564.9"/><line x1="377" y1="584.9" x2="1238" y2="584.9"/><line x1="377" y1="604.9" x2="1238" y2="604.9"/></g><rect x="377" y="623.8" width="861" height="1.8" fill="#eeeeee"/><rect x="719.6" y="514.5" width="2" height="110.5" fill="#aeaeae"/><rect x="1202.6" y="612" width="11" height="12.6" fill="#f76b6b"/><g font-family="'Liberation Sans', Arial, sans-serif" font-size="10.8" fill="#767676" text-anchor="end"><text x="372.4" y="527.70" textLength="17.0" lengthAdjust="spacingAndGlyphs">100</text><text x="372.4" y="547.80" textLength="11.3" lengthAdjust="spacingAndGlyphs">80</text><text x="372.4" y="567.80" textLength="11.3" lengthAdjust="spacingAndGlyphs">60</text><text x="372.4" y="587.80" textLength="11.3" lengthAdjust="spacingAndGlyphs">40</text><text x="372.4" y="607.80" textLength="11.3" lengthAdjust="spacingAndGlyphs">20</text></g><text transform="translate(384.4 521) rotate(-90)" font-family="'DejaVu Sans Mono', 'Liberation Mono', monospace" font-size="8.4" fill="#8c8c8c">%</text><g font-family="'Liberation Sans', Arial, sans-serif" font-size="9" fill="#727272"><text x="432.1" y="639.6" text-anchor="middle" textLength="42.2" lengthAdjust="spacingAndGlyphs">11:00 AM</text><text x="539.8" y="639.6" text-anchor="middle" textLength="42.2" lengthAdjust="spacingAndGlyphs">11:15 AM</text><text x="647.4" y="639.6" text-anchor="middle" textLength="42.2" lengthAdjust="spacingAndGlyphs">11:30 AM</text><text x="755.1" y="639.6" text-anchor="middle" textLength="42.2" lengthAdjust="spacingAndGlyphs">11:45 AM</text><text x="862.7" y="639.6" text-anchor="middle" textLength="42.2" lengthAdjust="spacingAndGlyphs">12:00 PM</text><text x="970.4" y="639.6" text-anchor="middle" textLength="42.2" lengthAdjust="spacingAndGlyphs">12:15 PM</text><text x="1078.1" y="639.6" text-anchor="middle" textLength="42.2" lengthAdjust="spacingAndGlyphs">12:30 PM</text><text x="1185.7" y="639.6" text-anchor="middle" textLength="42.2" lengthAdjust="spacingAndGlyphs">12:45 PM</text></g></svg>
<svg class="r gs" style="left:335px;top:674.5px" width="914" height="166" viewBox="335 674.5 914 166"><g stroke="#e6e6e6" stroke-width="1" shape-rendering="crispEdges"><line x1="421.5" y1="707" x2="421.5" y2="816.5"/><line x1="528.5" y1="707" x2="528.5" y2="816.5"/><line x1="636.5" y1="707" x2="636.5" y2="816.5"/><line x1="744.5" y1="707" x2="744.5" y2="816.5"/><line x1="851.5" y1="707" x2="851.5" y2="816.5"/><line x1="959.5" y1="707" x2="959.5" y2="816.5"/><line x1="1067.5" y1="707" x2="1067.5" y2="816.5"/><line x1="1175.5" y1="707" x2="1175.5" y2="816.5"/></g><g stroke="#efefef" stroke-width="1.6"><line x1="377" y1="712.4" x2="1238" y2="712.4"/><line x1="377" y1="734.2" x2="1238" y2="734.2"/><line x1="377" y1="755.4" x2="1238" y2="755.4"/><line x1="377" y1="776.5" x2="1238" y2="776.5"/><line x1="377" y1="797.6" x2="1238" y2="797.6"/></g><rect x="377" y="815.6" width="861" height="1.8" fill="#eeeeee"/><rect x="709.2" y="707" width="2" height="109.5" fill="#aeaeae"/><g fill="none" stroke-width="1.4" stroke-linejoin="round"><path d="M513.5 707 L686.4 786.4 L765.6 709.4" stroke="#faa94e" stroke-dasharray="9.5 5"/><path d="M765.6 709.4 L773.4 795.9" stroke="#faa94e" stroke-width="1.6"/><path d="M773.4 795.9 L1203 792.2" stroke="#faa94e" stroke-dasharray="9.5 5"/><path d="M378.8 751.3 L686.4 786.4 L765.6 773.6" stroke="#7fcbaa" stroke-dasharray="9.5 5"/><path d="M765.6 773.6 L773 811" stroke="#55b7bd" stroke-width="1.3"/><path d="M773 810.6 H1203" stroke="#a6d8ee" stroke-width="1.5" stroke-dasharray="9.5 5"/><path d="M773 813.3 H1203" stroke="#b7df74" stroke-width="1.3" stroke-dasharray="9.5 5"/></g><g font-family="'Liberation Sans', Arial, sans-serif" font-size="10.8" fill="#767676" text-anchor="end"><text x="373.2" y="715.10" textLength="22.6" lengthAdjust="spacingAndGlyphs">.25m</text><text x="373.2" y="737.00" textLength="17.0" lengthAdjust="spacingAndGlyphs">.2m</text><text x="373.2" y="758.10" textLength="22.6" lengthAdjust="spacingAndGlyphs">.15m</text><text x="373.2" y="779.20" textLength="17.0" lengthAdjust="spacingAndGlyphs">.1m</text><text x="373.2" y="800.40" textLength="22.6" lengthAdjust="spacingAndGlyphs">.05m</text></g><text transform="translate(384.6 713.2) rotate(-90)" font-family="'DejaVu Sans Mono', 'Liberation Mono', monospace" font-size="9" fill="#8c8c8c">s</text><g font-family="'Liberation Sans', Arial, sans-serif" font-size="9" fill="#727272"><text x="421.1" y="831.8" text-anchor="middle" textLength="42.2" lengthAdjust="spacingAndGlyphs">11:00 AM</text><text x="528.8" y="831.8" text-anchor="middle" textLength="42.2" lengthAdjust="spacingAndGlyphs">11:15 AM</text><text x="636.5" y="831.8" text-anchor="middle" textLength="42.2" lengthAdjust="spacingAndGlyphs">11:30 AM</text><text x="744.2" y="831.8" text-anchor="middle" textLength="42.2" lengthAdjust="spacingAndGlyphs">11:45 AM</text><text x="851.9" y="831.8" text-anchor="middle" textLength="42.2" lengthAdjust="spacingAndGlyphs">12:00 PM</text><text x="959.6" y="831.8" text-anchor="middle" textLength="42.2" lengthAdjust="spacingAndGlyphs">12:15 PM</text><text x="1067.3" y="831.8" text-anchor="middle" textLength="42.2" lengthAdjust="spacingAndGlyphs">12:30 PM</text><text x="1175.0" y="831.8" text-anchor="middle" textLength="42.2" lengthAdjust="spacingAndGlyphs">12:45 PM</text></g></svg>
<span class="t" style="left:1286.63px;top:320.98px;font:400 11px/14px 'DejaVu Sans Mono', 'Liberation Mono', monospace;color:#565656;letter-spacing:0.080px;">Requests</span>
<span class="t" style="left:1810.54px;top:320.98px;font:400 11px/14px 'DejaVu Sans Mono', 'Liberation Mono', monospace;color:#565656;letter-spacing:0.100px;">(sum)</span>
<div class="r" style="left:1287px;top:338.1px;width:576px;height:1px;background:#cccccc;"></div>
<div class="r" style="left:1287px;top:345.0px;width:576px;height:106px;overflow:hidden"><div class="r" style="left:0;top:0px;width:476.5px;height:24px;background:#edf5fc"></div><div class="r" style="left:0;top:0px;width:476.5px;height:24px;background:#7fc4e3"></div><span class="t" style="left:6px;top:4px;font:400 11.9px/16px 'Liberation Sans', Arial, sans-serif;color:#565656;letter-spacing:0.05px">GET /</span><span class="t" style="left:541.55px;top:6px;font:400 11px/14px 'DejaVu Sans Mono', 'Liberation Mono', monospace;color:#565656;letter-spacing:0">82</span><div class="r" style="left:0;top:30px;width:476.5px;height:24px;background:#edf5fc"></div><div class="r" style="left:0;top:30px;width:116.2px;height:24px;background:#7fc4e3"></div><span class="t" style="left:6px;top:34px;font:400 11.9px/16px 'Liberation Sans', Arial, sans-serif;color:#565656;letter-spacing:0.05px">GET /oups</span><span class="t" style="left:541.55px;top:36px;font:400 11px/14px 'DejaVu Sans Mono', 'Liberation Mono', monospace;color:#565656;letter-spacing:0">20</span><div class="r" style="left:0;top:60px;width:476.5px;height:24px;background:#edf5fc"></div><div class="r" style="left:0;top:60px;width:81.4px;height:24px;background:#7fc4e3"></div><span class="t" style="left:6px;top:64px;font:400 11.9px/16px 'Liberation Sans', Arial, sans-serif;color:#565656;letter-spacing:0.05px">GET /owners/{ownerId}</span><span class="t" style="left:541.55px;top:66px;font:400 11px/14px 'DejaVu Sans Mono', 'Liberation Mono', monospace;color:#565656;letter-spacing:0">14</span><div class="r" style="left:0;top:90px;width:476.5px;height:24px;background:#edf5fc"></div><div class="r" style="left:0;top:90px;width:58.1px;height:24px;background:#7fc4e3"></div><span class="t" style="left:6px;top:94px;font:400 11.9px/16px 'Liberation Sans', Arial, sans-serif;color:#565656;letter-spacing:0.05px">GET /owners</span><span class="t" style="left:541.55px;top:96px;font:400 11px/14px 'DejaVu Sans Mono', 'Liberation Mono', monospace;color:#565656;letter-spacing:0">10</span><div class="r" style="left:0;top:120px;width:476.5px;height:24px;background:#edf5fc"></div><div class="r" style="left:0;top:120px;width:46.5px;height:24px;background:#7fc4e3"></div><span class="t" style="left:6px;top:124px;font:400 11.9px/16px 'Liberation Sans', Arial, sans-serif;color:#565656;letter-spacing:0.05px">GET /owners/find</span><span class="t" style="left:548.18px;top:126px;font:400 11px/14px 'DejaVu Sans Mono', 'Liberation Mono', monospace;color:#565656;letter-spacing:0">8</span></div>
<div class="r" style="left:1848px;top:345.0px;width:15px;height:106px;background:#f1f1f1;"></div>
<div class="r" style="left:1850px;top:360.3px;width:11px;height:44.5px;background:#c1c1c1;"></div>
<svg class="r" style="left:1848px;top:345.0px;" width="15" height="15" viewBox="0 0 15 15"><path d="M4 9.6 L7.5 5.6 L11 9.6 Z" fill="#a3a3a3"/></svg>
<svg class="r" style="left:1848px;top:436.0px;" width="15" height="15" viewBox="0 0 15 15"><path d="M4 5.6 L7.5 9.6 L11 5.6 Z" fill="#505050"/></svg>
<span class="t" style="left:1286.63px;top:512.98px;font:400 11px/14px 'DejaVu Sans Mono', 'Liberation Mono', monospace;color:#565656;letter-spacing:0.080px;">Requests</span>
<span class="t" style="left:1825.74px;top:512.98px;font:400 11px/14px 'DejaVu Sans Mono', 'Liberation Mono', monospace;color:#565656;letter-spacing:0.100px;">(sum)</span>
<div class="r" style="left:1287px;top:530.1px;width:576px;height:1px;background:#cccccc;"></div>
<div class="r" style="left:1287px;top:537.0px;width:576px;height:106px;overflow:hidden"><div class="r" style="left:0;top:0px;width:492px;height:24px;background:#fdeceb"></div><div class="r" style="left:0;top:0px;width:492.0px;height:24px;background:#f56c64"></div><span class="t" style="left:6px;top:4px;font:400 11.9px/16px 'Liberation Sans', Arial, sans-serif;color:#565656;letter-spacing:0.05px">GET /oups</span><span class="t" style="left:556.75px;top:6px;font:400 11px/14px 'DejaVu Sans Mono', 'Liberation Mono', monospace;color:#565656;letter-spacing:0">20</span></div>
<span class="t" style="left:1286.63px;top:704.98px;font:400 11px/14px 'DejaVu Sans Mono', 'Liberation Mono', monospace;color:#565656;letter-spacing:0.080px;">Requests</span>
<span class="t" style="left:1810.54px;top:704.98px;font:400 11px/14px 'DejaVu Sans Mono', 'Liberation Mono', monospace;color:#565656;letter-spacing:0.100px;">(P95)</span>
<div class="r" style="left:1287px;top:722.1px;width:576px;height:1px;background:#cccccc;"></div>
<div class="r" style="left:1287px;top:729.0px;width:576px;height:106px;overflow:hidden"><div class="r" style="left:0;top:0px;width:476.5px;height:24px;background:#fff6e1"></div><div class="r" style="left:0;top:0px;width:476.5px;height:24px;background:#fad34d"></div><span class="t" style="left:6px;top:4px;font:400 11.9px/16px 'Liberation Sans', Arial, sans-serif;color:#565656;letter-spacing:0.05px">GET /owners</span><span class="t" style="left:508.44px;top:6px;font:400 11px/14px 'DejaVu Sans Mono', 'Liberation Mono', monospace;color:#565656;letter-spacing:0">0.25m s</span><div class="r" style="left:0;top:30px;width:476.5px;height:24px;background:#fff6e1"></div><div class="r" style="left:0;top:30px;width:207.5px;height:24px;background:#fad34d"></div><span class="t" style="left:6px;top:34px;font:400 11.9px/16px 'Liberation Sans', Arial, sans-serif;color:#565656;letter-spacing:0.05px">GET /owners/find</span><span class="t" style="left:508.44px;top:36px;font:400 11px/14px 'DejaVu Sans Mono', 'Liberation Mono', monospace;color:#565656;letter-spacing:0">0.11m s</span><div class="r" style="left:0;top:60px;width:476.5px;height:24px;background:#fff6e1"></div><div class="r" style="left:0;top:60px;width:178.5px;height:24px;background:#fad34d"></div><span class="t" style="left:6px;top:64px;font:400 11.9px/16px 'Liberation Sans', Arial, sans-serif;color:#565656;letter-spacing:0.05px">GET /owners/{ownerId}</span><span class="t" style="left:508.44px;top:66px;font:400 11px/14px 'DejaVu Sans Mono', 'Liberation Mono', monospace;color:#565656;letter-spacing:0">0.09m s</span><div class="r" style="left:0;top:90px;width:476.5px;height:24px;background:#fff6e1"></div><div class="r" style="left:0;top:90px;width:98.5px;height:24px;background:#fad34d"></div><span class="t" style="left:6px;top:94px;font:400 11.9px/16px 'Liberation Sans', Arial, sans-serif;color:#565656;letter-spacing:0.05px">GET /</span><span class="t" style="left:508.44px;top:96px;font:400 11px/14px 'DejaVu Sans Mono', 'Liberation Mono', monospace;color:#565656;letter-spacing:0">0.05m s</span><div class="r" style="left:0;top:120px;width:476.5px;height:24px;background:#fff6e1"></div><div class="r" style="left:0;top:120px;width:71.5px;height:24px;background:#fad34d"></div><span class="t" style="left:6px;top:124px;font:400 11.9px/16px 'Liberation Sans', Arial, sans-serif;color:#565656;letter-spacing:0.05px">GET /oups</span><span class="t" style="left:508.44px;top:126px;font:400 11px/14px 'DejaVu Sans Mono', 'Liberation Mono', monospace;color:#565656;letter-spacing:0">0.03m s</span></div>
<div class="r" style="left:1848px;top:729.0px;width:15px;height:106px;background:#f1f1f1;"></div>
<div class="r" style="left:1850px;top:744.3px;width:11px;height:54.4px;background:#c1c1c1;"></div>
<svg class="r" style="left:1848px;top:729.0px;" width="15" height="15" viewBox="0 0 15 15"><path d="M4 9.6 L7.5 5.6 L11 9.6 Z" fill="#a3a3a3"/></svg>
<svg class="r" style="left:1848px;top:820.0px;" width="15" height="15" viewBox="0 0 15 15"><path d="M4 5.6 L7.5 9.6 L11 5.6 Z" fill="#505050"/></svg>
<div class="r" style="left:1861px;top:745.3px;width:33px;height:39.5px;background:rgba(88,88,88,0.6);border-radius:2px 0 0 2px"></div>
<svg class="r" style="left:1870px;top:754.4px;" width="23.2" height="23.2" viewBox="0 0 16 16"><g fill="none" stroke="#ffffff" stroke-width="1.4"><rect x="-3.9" y="-2.4" width="7.8" height="4.8" rx="2.4" transform="translate(9.9 5.9) rotate(-42)"/><path d="M1.6 -2.4 H-1.5 a2.4 2.4 0 0 0 0 4.8 H1.5 a2.4 2.4 0 0 0 2.35 -1.9 M3.2 -1.75 a2.4 2.4 0 0 0 -0.6 -0.45" transform="translate(5.7 9.7) rotate(-42)"/></g></svg>
</body></html>
